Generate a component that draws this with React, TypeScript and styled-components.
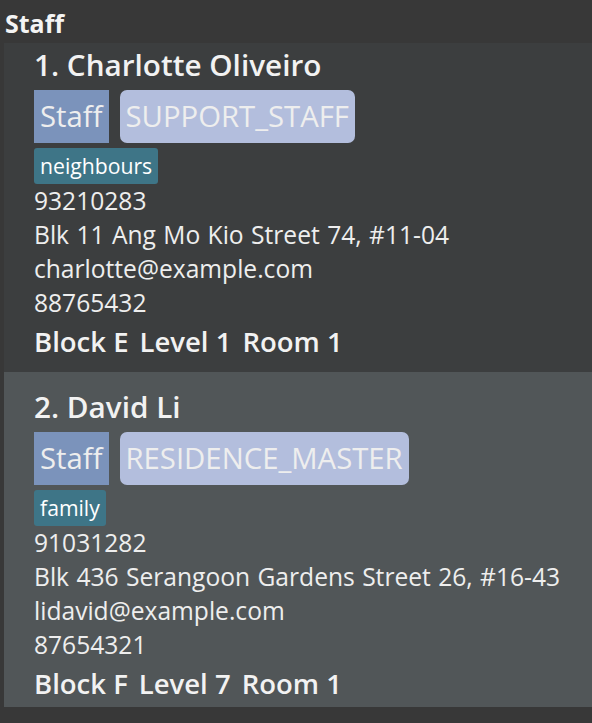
import React from 'react';
import styled, { createGlobalStyle } from 'styled-components';

const GlobalStyle = createGlobalStyle`
  html, body {
    margin: 0;
    padding: 0;
    background-color: #383838;
  }

  body {
    font-family: "Open Sans", "Noto Sans", sans-serif;
    color: #f0f0f0;
  }
`;

const Page = styled.div`
  display: flex;
  flex-direction: column;
  width: 592px;
  height: 723px;
  overflow: hidden;
  background-color: #383838;
`;

const PanelTitle = styled.div`
  height: 43px;
  padding-left: 5px;
  font-size: 25px;
  font-weight: 700;
  line-height: 46px;
  color: #f4f4f4;
`;

const ListViewport = styled.div`
  height: 664px;
  margin-left: 4px;
  overflow: hidden;
`;

// list is scrolled a little, so the first card's top is hidden
const ListInner = styled.div`
  margin-top: -13px;
`;

const Card = styled.div<{ $odd: boolean }>`
  display: flex;
  flex-direction: column;
  align-items: flex-start;
  padding: 15px 10px 10px 30px;
  background-color: ${props => (props.$odd ? '#515658' : '#3c3e3f')};
`;

const Name = styled.div`
  height: 40px;
  font-size: 29.7px;
  font-weight: 600;
  line-height: 40px;
  color: #f2f2f2;
`;

const BadgeRow = styled.div`
  display: flex;
  gap: 11px;
  margin-top: 5px;
`;

const Badge = styled.div<{ $kind: 'type' | 'role' }>`
  height: 53px;
  padding: 0 6px;
  font-size: 29.3px;
  font-weight: 500;
  line-height: 53px;
  color: #eeeeee;
  border-radius: ${props => (props.$kind === 'role' ? '7px' : '0')};
  background-color: ${props => (props.$kind === 'role' ? '#b3bedd' : '#7b93bb')};
`;

const Tags = styled.div`
  display: flex;
  gap: 6px;
  margin-top: 5px;
`;

const Tag = styled.div`
  height: 36px;
  padding: 0 6px;
  font-size: 21.2px;
  font-weight: 500;
  line-height: 36px;
  color: #ffffff;
  border-radius: 3px;
  background-color: #3e7587;
`;

const Detail = styled.div`
  height: 34px;
  font-size: 24.6px;
  line-height: 34px;
  word-spacing: 1px;
  color: #eeeeee;
`;

const Location = styled.div`
  display: flex;
  gap: 11px;
  height: 40px;
  margin-top: 2px;
  font-size: 27.5px;
  font-weight: 600;
  line-height: 40px;
  color: #f2f2f2;
`;

type Person = {
  name: string;
  role: string;
  tags: string[];
  phone: string;
  address: string;
  email: string;
  emergency: string;
  block: string;
  level: string;
  room: string;
};

const people: Person[] = [
  {
    name: 'Charlotte Oliveiro',
    role: 'SUPPORT_STAFF',
    tags: ['neighbours'],
    phone: '93210283',
    address: 'Blk 11 Ang Mo Kio Street 74, #11-04',
    email: 'charlotte@example.com',
    emergency: '88765432',
    block: 'E',
    level: '1',
    room: '1',
  },
  {
    name: 'David Li',
    role: 'RESIDENCE_MASTER',
    tags: ['family'],
    phone: '91031282',
    address: 'Blk 436 Serangoon Gardens Street 26, #16-43',
    email: 'lidavid@example.com',
    emergency: '87654321',
    block: 'F',
    level: '7',
    room: '1',
  },
];

const App = () => {
  return (
    <Page>
      <GlobalStyle />
      <PanelTitle>Staff</PanelTitle>
      <ListViewport>
        <ListInner>
          {people.map((p, i) => (
            <Card key={p.name} $odd={i % 2 === 1}>
              <Name>
                {i + 1}. {p.name}
              </Name>
              <BadgeRow>
                <Badge $kind="type">Staff</Badge>
                <Badge $kind="role">{p.role}</Badge>
              </BadgeRow>
              <Tags>
                {p.tags.map(t => (
                  <Tag key={t}>{t}</Tag>
                ))}
              </Tags>
              <Detail>{p.phone}</Detail>
              <Detail>{p.address}</Detail>
              <Detail>{p.email}</Detail>
              <Detail>{p.emergency}</Detail>
              <Location>
                <span>Block {p.block}</span>
                <span>Level {p.level}</span>
                <span>Room {p.room}</span>
              </Location>
            </Card>
          ))}
        </ListInner>
      </ListViewport>
    </Page>
  );
};

export default App;
